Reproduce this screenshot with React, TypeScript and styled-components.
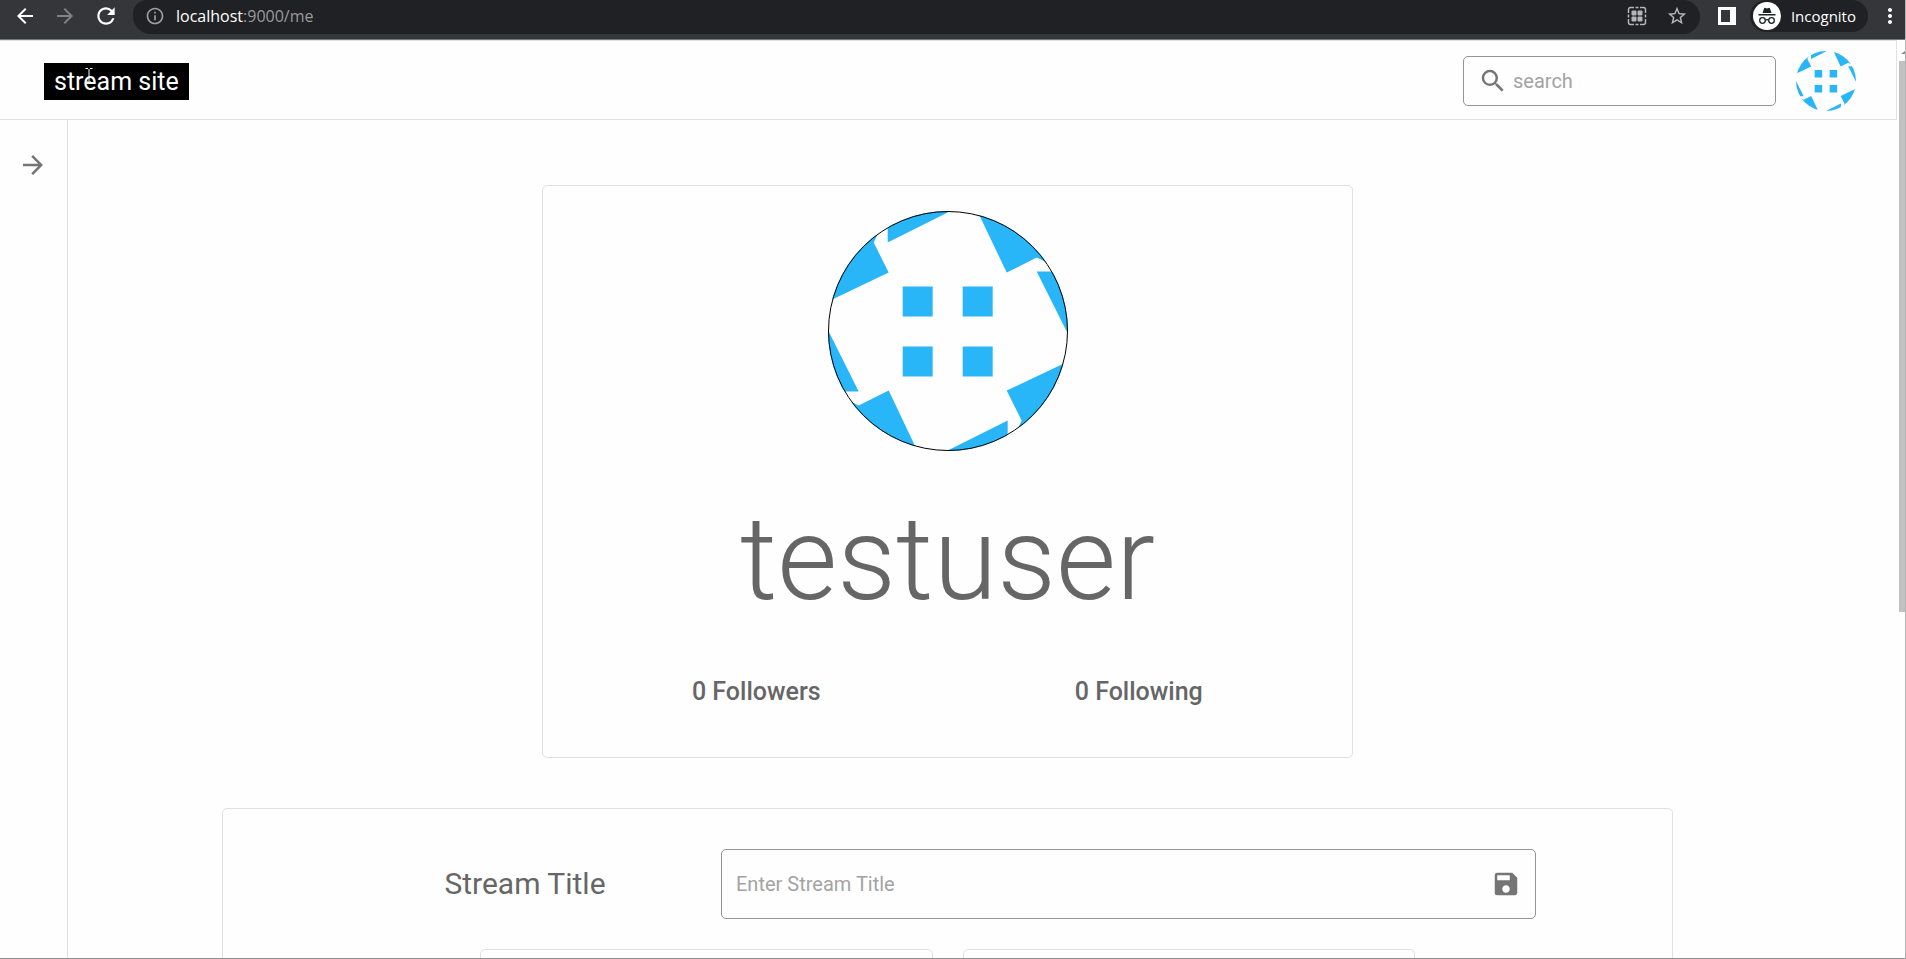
import React from "react";
import styled, { createGlobalStyle } from "styled-components";
import {
  MdArrowBack,
  MdArrowForward,
  MdInfoOutline,
  MdMoreVert,
  MdRefresh,
  MdSave,
  MdSearch,
  MdStarBorder,
} from "react-icons/md";

const GlobalStyle = createGlobalStyle`
  *, *::before, *::after { box-sizing: border-box; }
  body {
    margin: 0;
    overflow: hidden;
    background: #fefefe;
    font-family: Roboto, "Liberation Sans", sans-serif;
    color: #666;
  }
  button, input { font: inherit; color: inherit; }
`;

const Window = styled.div`
  display: flex;
  flex-direction: column;
  height: 100vh;
  border-right: 1px solid #b4b4b4;
  border-bottom: 1px solid #8f8f8f;
`;

const BrowserBar = styled.div`
  flex: none;
  display: flex;
  align-items: flex-start;
  height: 40px;
  padding-left: 13px;
  background: #35363a;
  border-bottom: 1px solid #77787a;
  font-family: "Open Sans", "Noto Sans", sans-serif;
`;

const IconButton = styled.button<{ $size?: number; $color?: string }>`
  flex: none;
  display: flex;
  align-items: center;
  justify-content: center;
  width: ${(p) => p.$size ?? 30}px;
  height: ${(p) => p.$size ?? 30}px;
  padding: 0;
  border: 0;
  background: none;
  color: ${(p) => p.$color ?? "#757575"};
`;

const NavButtons = styled.div`
  display: flex;
  align-items: center;
  gap: 16px;
  height: 32px;
`;

const AddressBar = styled.div`
  flex: 1;
  display: flex;
  align-items: center;
  gap: 11px;
  height: 34px;
  margin: 0 4px 0 14px;
  padding: 0 8px 2px 12px;
  border-radius: 14px 17px 17px 18px;
  background: #202124;
`;

const Url = styled.div`
  flex: 1;
  font-size: 16px;
  line-height: 24px;
  color: #999a9c;
`;

const Host = styled.span`
  color: #fff;
`;

const AddressActions = styled.div`
  display: flex;
  gap: 10px;
`;

const BrowserActions = styled.div`
  display: flex;
  align-items: center;
  height: 32px;
`;

const IncognitoBadge = styled.div`
  display: flex;
  align-items: center;
  gap: 10px;
  height: 32px;
  margin-right: 7px;
  padding: 0 12px 0 3px;
  border-radius: 16px;
  background: #202124;
  color: #fff;
  font-size: 15px;
  line-height: 20px;
`;

const Viewport = styled.div`
  flex: 1;
  display: flex;
  min-height: 0;
`;

const Page = styled.div`
  flex: 1;
  display: flex;
  flex-direction: column;
  min-width: 0;
  overflow: hidden;
`;

const Header = styled.header`
  flex: none;
  display: flex;
  align-items: center;
  justify-content: space-between;
  height: 80px;
  padding: 2px 40px 0 44px;
  border: 1px solid #e0e0e0;
  border-left: 0;
`;

const Logo = styled.a`
  position: relative;
  padding: 0 10px;
  background: #000;
  color: #fff;
  font-size: 25px;
  line-height: 37px;
  text-decoration: none;
`;

const TextCursor = styled.svg`
  position: absolute;
  left: 41px;
  top: 5px;
`;

const HeaderTools = styled.div`
  display: flex;
  align-items: center;
  gap: 20px;
`;

const Field = styled.label<{ $height: number }>`
  display: flex;
  align-items: center;
  height: ${(p) => p.$height}px;
  padding: 0 14px;
  border: 1px solid #949494;
  border-radius: 5px;
`;

const SearchField = styled(Field)`
  gap: 5px;
  width: 313px;
`;

const TextInput = styled.input`
  flex: 1;
  min-width: 0;
  padding: 0;
  border: 0;
  outline: 0;
  background: none;
  font-size: 20px;
  line-height: 30px;
  &::placeholder { color: #a3a3a3; opacity: 1; }
`;

const AvatarButton = styled.button`
  display: flex;
  padding: 0;
  border: 0;
  border-radius: 50%;
  background: none;
`;

const Body = styled.div`
  flex: 1;
  display: flex;
  min-height: 0;
`;

const Sidebar = styled.nav`
  flex: none;
  width: 68px;
  padding: 30px 18px;
  border-right: 1px solid #e0e0e0;
`;

const Main = styled.main`
  flex: 1;
  display: flex;
  flex-direction: column;
  align-items: center;
  gap: 50px;
  min-width: 0;
  padding: 65px 70px 0 0;
  overflow: hidden;
`;

const Card = styled.section`
  border: 1px solid #e0e0e0;
  border-radius: 5px;
`;

const ProfileCard = styled(Card)`
  flex: none;
  display: flex;
  flex-direction: column;
  align-items: center;
  width: 100%;
  max-width: 811px;
  padding: 25px 22px 45px;
`;

const UserName = styled.h1`
  margin: 38px 0 43px;
  font-size: 116px;
  font-weight: 300;
  line-height: 140px;
`;

const Stats = styled.div`
  display: grid;
  grid-template-columns: 1fr 1fr;
  width: 100%;
  text-align: center;
  font-size: 25px;
  font-weight: 500;
  line-height: 40px;
`;

const StreamCard = styled(Card)`
  flex: none;
  width: 100%;
  max-width: 1451px;
  padding-top: 40px;
`;

const TitleRow = styled.div`
  display: grid;
  grid-template-columns: 392px 1fr;
  align-items: center;
  padding: 0 136px 0 106px;
`;

const TitleLabel = styled.label`
  text-align: center;
  font-size: 30px;
  line-height: 40px;
`;

const Panels = styled.div`
  display: grid;
  grid-template-columns: 1fr 1fr;
  gap: 30px;
  margin-top: 30px;
  padding: 0 257px;
`;

const Panel = styled(Card)`
  height: 250px;
`;

const Scrollbar = styled.div`
  flex: none;
  display: flex;
  flex-direction: column;
  width: 8px;
  padding-left: 2px;
`;

const ScrollArrow = styled.svg`
  flex: none;
  margin: 11px 0 6px;
`;

const ScrollThumb = styled.div`
  height: 60%;
  background: #c1c1c1;
`;

const turns = [0, 90, 180, 270];

function Avatar({ size, outlined }: { size: number; outlined?: boolean }) {
  const clip = `avatar-${size}`;
  return (
    <svg width={size} height={size} viewBox="0 0 240 240" role="img" aria-label="testuser avatar">
      <clipPath id={clip}>
        <circle cx="120" cy="120" r="120" />
      </clipPath>
      <g clipPath={`url(#${clip})`} fill="#29b6f9">
        {turns.map((turn) => (
          <g key={turn} transform={`translate(-.3 .6) rotate(${turn} 120 120)`}>
            <path d="M60 -2V31L120 1V-2Z" />
            <path d="M149 -2L179 61L209 46L240 61V-2Z" />
            <path d="M75 75H105V105H75Z" />
          </g>
        ))}
      </g>
      {outlined && <circle cx="120" cy="120" r="119.5" fill="none" stroke="#000" />}
    </svg>
  );
}

function QrIcon() {
  return (
    <svg width="20" height="20" viewBox="0 0 20 20" fill="none" stroke="#b4b5b7" strokeWidth="1.5">
      <path d="M1.5 7V3.500a2 2 0 0 1 2-2H7M8.500 1.500h3M13 1.500h3.500a2 2 0 0 1 2 2V7M18.500 8.500v3M18.500 13v3.500a2 2 0 0 1-2 2H13M11.500 18.500h-3M7 18.500H3.500a2 2 0 0 1-2-2V13M1.500 11.500v-3" />
      <g fill="#b4b5b7" stroke="none">
        <rect x="4.500" y="4.500" width="5" height="5" rx="1" />
        <rect x="10.500" y="4.500" width="5" height="5" rx="1" />
        <rect x="4.500" y="10.500" width="5" height="5" rx="1" />
        <rect x="10.500" y="10.500" width="5" height="5" rx="1" />
      </g>
    </svg>
  );
}

function SidePanelIcon() {
  return (
    <svg width="18" height="18" viewBox="0 0 18 18">
      <path fill="#fff" fillRule="evenodd" d="M0 0H18V18H0ZM3 3V15H12V3Z" />
    </svg>
  );
}

function IncognitoIcon() {
  return (
    <svg width="28" height="28" viewBox="0 0 28 28">
      <circle cx="14" cy="14" r="14" fill="#fff" />
      <path fill="#202124" d="M9.500 11L11 6.500Q11.500 5.500 12.500 6L14 6.500L15.500 6Q16.500 5.500 17 6.500L18.500 11ZM5.500 12H22.500V13.500H5.500Z" />
      <g fill="none" stroke="#202124" strokeWidth="1.300">
        <circle cx="9.500" cy="18.500" r="2.800" />
        <circle cx="18.500" cy="18.500" r="2.800" />
        <path d="M12.300 18.200Q14 17.200 15.700 18.200" />
      </g>
    </svg>
  );
}

export default function App() {
  return (
    <Window>
      <GlobalStyle />
      <BrowserBar>
        <NavButtons>
          <IconButton $size={24} $color="#fff" aria-label="Back">
            <MdArrowBack size={24} />
          </IconButton>
          <IconButton $size={24} $color="#808184" aria-label="Forward">
            <MdArrowForward size={24} />
          </IconButton>
          <IconButton $size={26} $color="#fff" aria-label="Reload">
            <MdRefresh size={26} />
          </IconButton>
        </NavButtons>
        <AddressBar>
          <IconButton $size={20} $color="#9aa0a6" aria-label="Site information">
            <MdInfoOutline size={20} />
          </IconButton>
          <Url>
            <Host>localhost</Host>:9000/me
          </Url>
          <AddressActions>
            <IconButton $color="#b4b5b7" aria-label="Create QR code">
              <QrIcon />
            </IconButton>
            <IconButton $color="#b4b5b7" aria-label="Bookmark this page">
              <MdStarBorder size={22} />
            </IconButton>
          </AddressActions>
        </AddressBar>
        <BrowserActions>
          <IconButton $size={46} aria-label="Side panel">
            <SidePanelIcon />
          </IconButton>
          <IncognitoBadge>
            <IncognitoIcon />
            Incognito
          </IncognitoBadge>
          <IconButton $color="#fff" aria-label="Menu">
            <MdMoreVert size={24} />
          </IconButton>
        </BrowserActions>
      </BrowserBar>
      <Viewport>
        <Page>
          <Header>
            <Logo href="/">
              stream site
              <TextCursor width="8" height="16" viewBox="0 0 8 16" aria-hidden="true">
                <path d="M.5.5H3M5 .5H7.500M4 1V14M2.500 13L4 15L5.500 13" fill="none" stroke="#fff" />
              </TextCursor>
            </Logo>
            <HeaderTools>
              <SearchField $height={50}>
                <MdSearch size={30} color="#757575" aria-hidden="true" />
                <TextInput type="search" placeholder="search" aria-label="search" />
              </SearchField>
              <AvatarButton aria-label="Account">
                <Avatar size={60} />
              </AvatarButton>
            </HeaderTools>
          </Header>
          <Body>
            <Sidebar>
              <IconButton aria-label="Expand sidebar">
                <MdArrowForward size={30} />
              </IconButton>
            </Sidebar>
            <Main>
              <ProfileCard>
                <Avatar size={240} outlined />
                <UserName>testuser</UserName>
                <Stats>
                  <span>0 Followers</span>
                  <span>0 Following</span>
                </Stats>
              </ProfileCard>
              <StreamCard>
                <TitleRow>
                  <TitleLabel htmlFor="stream-title">Stream Title</TitleLabel>
                  <Field as="div" $height={70}>
                    <TextInput id="stream-title" type="text" placeholder="Enter Stream Title" />
                    <IconButton aria-label="Save">
                      <MdSave size={30} />
                    </IconButton>
                  </Field>
                </TitleRow>
                <Panels>
                  <Panel />
                  <Panel />
                </Panels>
              </StreamCard>
            </Main>
          </Body>
        </Page>
        <Scrollbar aria-hidden="true">
          <ScrollArrow width="6" height="4" viewBox="0 0 6 4">
            <path d="M2 3L6 0V3Z" fill="#8a8a8a" />
          </ScrollArrow>
          <ScrollThumb />
        </Scrollbar>
      </Viewport>
    </Window>
  );
}
